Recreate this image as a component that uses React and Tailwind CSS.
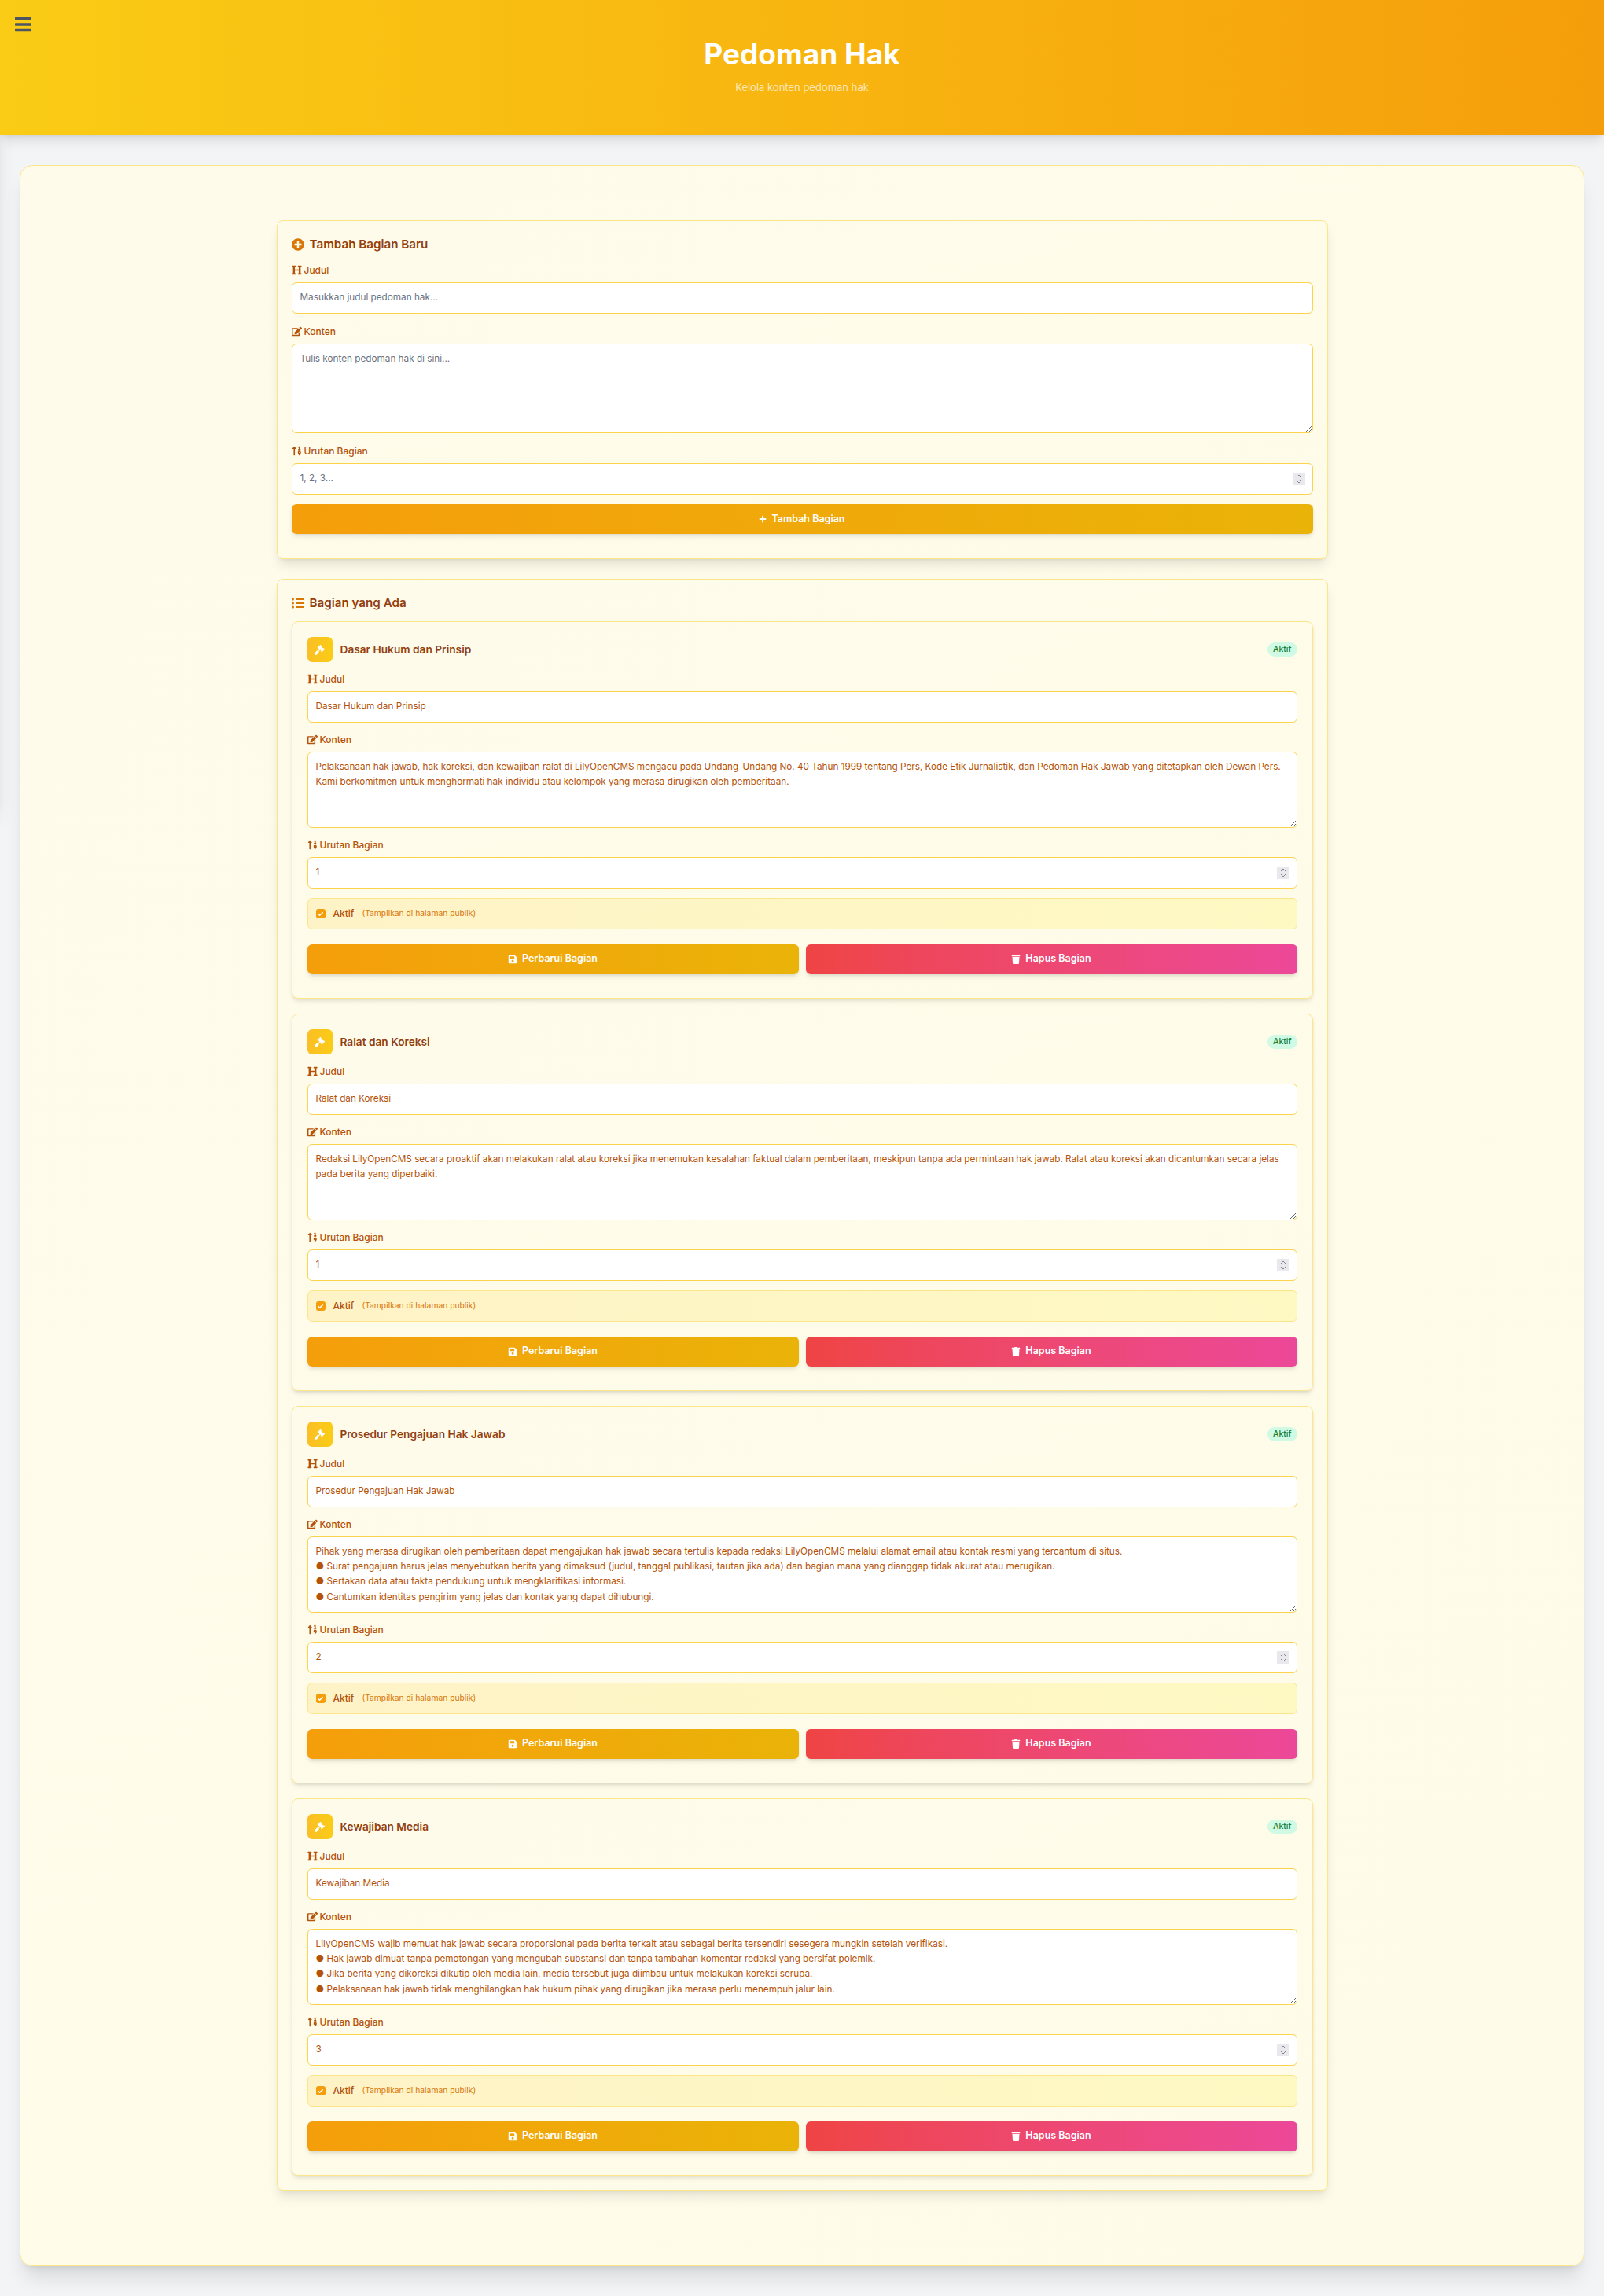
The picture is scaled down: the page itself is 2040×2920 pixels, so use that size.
import { useState } from 'react';
import { FaBars, FaPlusCircle, FaHeading, FaEdit, FaSortNumericUp, FaPlus, FaListUl, FaGavel, FaSave, FaTrash, FaCheck } from 'react-icons/fa';

const SECTIONS = [
  {
    id: 1,
    title: 'Dasar Hukum dan Prinsip',
    order: 1,
    content:
      'Pelaksanaan hak jawab, hak koreksi, dan kewajiban ralat di LilyOpenCMS mengacu pada Undang-Undang No. 40 Tahun 1999 tentang Pers, Kode Etik Jurnalistik, dan Pedoman Hak Jawab yang ditetapkan oleh Dewan Pers. Kami berkomitmen untuk menghormati hak individu atau kelompok yang merasa dirugikan oleh pemberitaan.',
  },
  {
    id: 2,
    title: 'Ralat dan Koreksi',
    order: 1,
    content:
      'Redaksi LilyOpenCMS secara proaktif akan melakukan ralat atau koreksi jika menemukan kesalahan faktual dalam pemberitaan, meskipun tanpa ada permintaan hak jawab. Ralat atau koreksi akan dicantumkan secara jelas pada berita yang diperbaiki.',
  },
  {
    id: 3,
    title: 'Prosedur Pengajuan Hak Jawab',
    order: 2,
    content:
      'Pihak yang merasa dirugikan oleh pemberitaan dapat mengajukan hak jawab secara tertulis kepada redaksi LilyOpenCMS melalui alamat email atau kontak resmi yang tercantum di situs.\n● Surat pengajuan harus jelas menyebutkan berita yang dimaksud (judul, tanggal publikasi, tautan jika ada) dan bagian mana yang dianggap tidak akurat atau merugikan.\n● Sertakan data atau fakta pendukung untuk mengklarifikasi informasi.\n● Cantumkan identitas pengirim yang jelas dan kontak yang dapat dihubungi.',
  },
  {
    id: 4,
    title: 'Kewajiban Media',
    order: 3,
    content:
      'LilyOpenCMS wajib memuat hak jawab secara proporsional pada berita terkait atau sebagai berita tersendiri sesegera mungkin setelah verifikasi.\n● Hak jawab dimuat tanpa pemotongan yang mengubah substansi dan tanpa tambahan komentar redaksi yang bersifat polemik.\n● Jika berita yang dikoreksi dikutip oleh media lain, media tersebut juga diimbau untuk melakukan koreksi serupa.\n● Pelaksanaan hak jawab tidak menghilangkan hak hukum pihak yang dirugikan jika merasa perlu menempuh jalur lain.',
  },
];

const inputCls =
  'block w-full h-[40px] px-[10px] pb-[2px] bg-white border border-[#fcd34d] rounded-[6px] text-[11.74px] text-[#b45309] placeholder:text-[#6b7280] outline-none';
const numberCls = inputCls + ' [appearance:textfield] [&::-webkit-inner-spin-button]:appearance-none';
const areaCls =
  'block w-full px-[10px] py-[9px] bg-white border border-[#fcd34d] rounded-[6px] text-[11.74px] leading-[19.2px] text-[#b45309] placeholder:text-[#6b7280] outline-none';
const cardCls = 'border border-[#fde68a] rounded-[8px] bg-gradient-to-br from-[#fffbeb] to-[#fefce8]';
const amberBtn = 'bg-gradient-to-r from-[#f59e0b] to-[#eab308]';

function Label({ icon: Icon, children }) {
  return (
    <label className="flex items-center gap-[3px] h-[18px] mb-[6px] pb-[1px] text-[12px] font-medium text-[#b45309]">
      <Icon className="w-[13px] h-[13px]" />
      {children}
    </label>
  );
}

// spinner selalu tampil seperti di halaman asli
function NumberField({ className, ...props }) {
  return (
    <div className={`relative ${className}`}>
      <input type="number" className={numberCls} {...props} />
      <div className="absolute right-[10px] top-[12px] w-[16px] h-[16px] bg-[#e9e9ed] pointer-events-none flex items-center justify-center">
        <svg width="8" height="14" viewBox="0 0 8 14" fill="none" stroke="#85858f" strokeWidth="1">
          <path d="M1 5 L4 2 L7 5" />
          <path d="M1 9 L4 12 L7 9" />
        </svg>
      </div>
    </div>
  );
}

function SectionCard({ section, last }) {
  const [title, setTitle] = useState(section.title);
  const [content, setContent] = useState(section.content);
  const [order, setOrder] = useState(section.order);
  const [active, setActive] = useState(true);

  return (
    <div className={`${cardCls} px-[19px] pt-[19px] pb-[30px] shadow-md ${last ? '' : 'mb-[19px]'}`}>
      <div className="flex items-center justify-between mb-[13px]">
        <div className="flex items-center gap-[10px]">
          <div className="w-[32px] h-[32px] rounded-[6px] bg-gradient-to-r from-[#fbbf24] to-[#facc15] flex items-center justify-center text-white">
            <FaGavel className="w-[13px] h-[13px]" />
          </div>
          <h3 className="text-[13.7px] font-semibold text-[#92400e]">{title}</h3>
        </div>
        <span className="px-[7px] h-[18px] flex items-center rounded-full bg-[#d1fae5] text-[#15803d] text-[10.5px] font-medium">Aktif</span>
      </div>

      <Label icon={FaHeading}>Judul</Label>
      <input className={`${inputCls} mb-[13px]`} value={title} onChange={(e) => setTitle(e.target.value)} />

      <Label icon={FaEdit}>Konten</Label>
      <textarea className={`${areaCls} h-[97px] mb-[13px]`} value={content} onChange={(e) => setContent(e.target.value)} />

      <Label icon={FaSortNumericUp}>Urutan Bagian</Label>
      <NumberField className="mb-[12px]" value={order} onChange={(e) => setOrder(e.target.value)} />

      <label className="flex items-center h-[40px] px-[10px] border border-[#fde68a] rounded-[6px] bg-gradient-to-r from-[#fef3c7] to-[#fef9c3]">
        <input type="checkbox" className="sr-only" checked={active} onChange={(e) => setActive(e.target.checked)} />
        <span className="w-[12px] h-[12px] rounded-[3px] bg-[#f59e0b] flex items-center justify-center text-white">
          <FaCheck className="w-[7px] h-[7px]" />
        </span>
        <span className="ml-[10px] pb-[1px] text-[12px] font-medium text-[#b45309]">Aktif</span>
        <span className="ml-[10px] text-[10.3px] text-[#d97706]">(Tampilkan di halaman publik)</span>
      </label>

      <div className="grid grid-cols-2 gap-[9px] mt-[19px]">
        <button className={`h-[38px] pb-[1px] rounded-[6px] ${amberBtn} text-white text-[12.5px] font-semibold shadow-md flex items-center justify-center gap-[6px]`}>
          <FaSave className="w-[12px] h-[12px]" />
          Perbarui Bagian
        </button>
        <button className="h-[38px] pb-[1px] rounded-[6px] bg-gradient-to-r from-[#ef4444] to-[#ec4899] text-white text-[12.5px] font-semibold shadow-md flex items-center justify-center gap-[6px]">
          <FaTrash className="w-[12px] h-[12px]" />
          Hapus Bagian
        </button>
      </div>
    </div>
  );
}

export default function App() {
  return (
    <div className="relative min-h-[2920px] bg-[#f3f4f6] font-['Inter',sans-serif] pb-[38px] overflow-hidden">
      {/* sidebar tertutup, hanya bayangannya yang terlihat */}
      <div className="absolute top-0 left-[-256px] w-[256px] h-[1024px] bg-white shadow-xl" />

      <header className="relative z-10 h-[172px] bg-gradient-to-r from-[#facc15] to-[#f59e0b] shadow-lg flex flex-col items-center">
        <button className="absolute left-[19px] top-[19px] text-[#4b5563]">
          <FaBars className="w-[21px] h-[24px]" />
        </button>
        <h1 className="mt-[46px] text-[37px] leading-[46px] font-bold text-white">Pedoman Hak</h1>
        <p className="mt-[8px] text-[13px] leading-[22px] text-white/70">Kelola konten pedoman hak</p>
      </header>

      <main className="relative mx-[25px] mt-[38px] h-[2672px] border border-[#fde68a] rounded-[16px] bg-gradient-to-br from-[#fffbeb] to-[#fefce8] shadow-xl pt-[69px]">
        <div className="w-[1337px] mx-auto">
          {/* Form tambah */}
          <section className={`${cardCls} px-[18px] pt-[18px] pb-[31px] shadow-lg mb-[25px]`}>
            <h2 className="flex items-center gap-[7px] h-[24px] mb-[12px] text-[15.2px] font-semibold text-[#92400e]">
              <FaPlusCircle className="w-[16px] h-[16px] text-[#d97706]" />
              Tambah Bagian Baru
            </h2>
            <Label icon={FaHeading}>Judul</Label>
            <input className={`${inputCls} mb-[14px]`} placeholder="Masukkan judul pedoman hak..." />
            <Label icon={FaEdit}>Konten</Label>
            <textarea className={`${areaCls} h-[114px] mb-[14px]`} placeholder="Tulis konten pedoman hak di sini..." />
            <Label icon={FaSortNumericUp}>Urutan Bagian</Label>
            <NumberField className="mb-[12px]" placeholder="1, 2, 3..." />
            <button className={`w-full h-[38px] rounded-[6px] ${amberBtn} text-white text-[12.5px] font-semibold shadow-md flex items-center justify-center gap-[6px]`}>
              <FaPlus className="w-[10px] h-[10px]" />
              Tambah Bagian
            </button>
          </section>

          {/* Daftar bagian */}
          <section className={`${cardCls} px-[18px] pt-[18px] pb-[18px] shadow-lg`}>
            <h2 className="flex items-center gap-[7px] h-[24px] mb-[11px] text-[15.2px] font-semibold text-[#92400e]">
              <FaListUl className="w-[16px] h-[16px] text-[#d97706]" />
              Bagian yang Ada
            </h2>
            {SECTIONS.map((s, i) => (
              <SectionCard key={s.id} section={s} last={i === SECTIONS.length - 1} />
            ))}
          </section>
        </div>
      </main>
    </div>
  );
}
